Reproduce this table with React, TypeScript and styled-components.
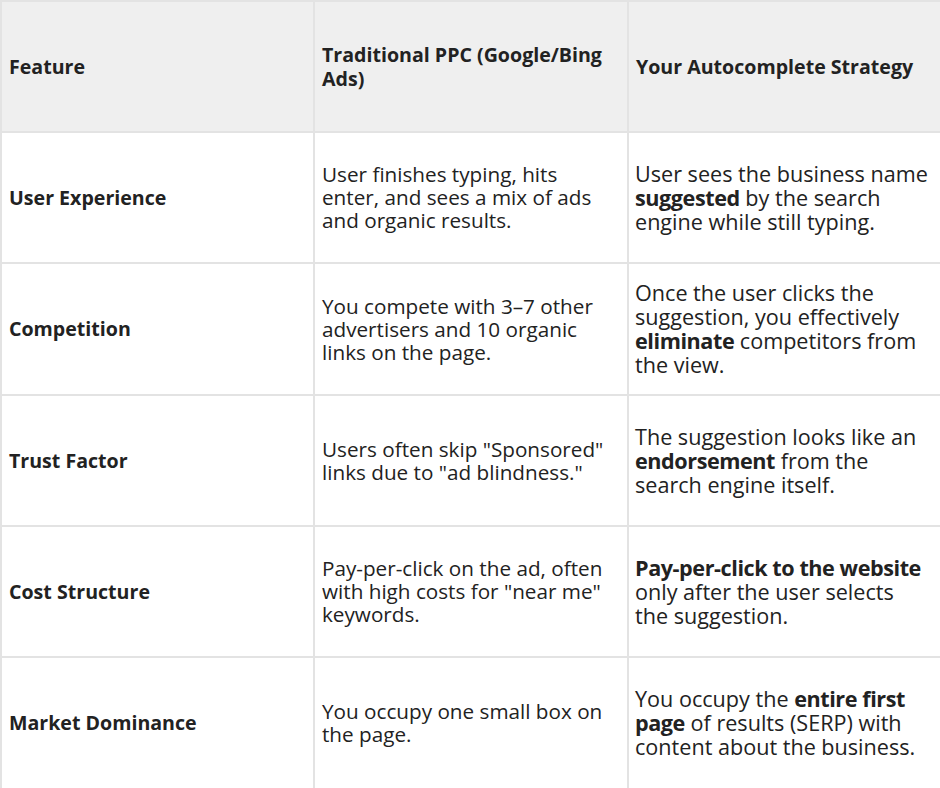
import React from "react";
import styled, { createGlobalStyle } from "styled-components";

const Global = createGlobalStyle`
  html, body { margin: 0; padding: 0; background: #ffffff; }
  body { font-family: "Open Sans", "Noto Sans", sans-serif; color: #222222; }
`;

const Table = styled.div`
  width: 940px;
  height: 788px;
  display: grid;
  grid-template-columns: 313px 314px 313px;
  grid-template-rows: 131px 131px 132px 131px 131px 132px;
  box-sizing: border-box;
  border-top: 2px solid #e3e3e3;
  border-left: 2px solid #e3e3e3;
`;

type Kind = "head" | "label" | "ppc" | "auto";

const sizes: Record<Kind, { fs: string; lh: string; fw: number; pl: string }> = {
  head: { fs: "19.6px", lh: "23.6px", fw: 700, pl: "7px" },
  label: { fs: "19.6px", lh: "23.6px", fw: 700, pl: "7px" },
  ppc: { fs: "20.7px", lh: "23px", fw: 400, pl: "7px" },
  auto: { fs: "21.6px", lh: "24px", fw: 400, pl: "6px" },
};

const Cell = styled.div<{ $kind: Kind }>`
  box-sizing: border-box;
  border-right: 2px solid #e3e3e3;
  border-bottom: 2px solid #e3e3e3;
  background: ${(p) => (p.$kind === "head" ? "#efefef" : "#ffffff")};
  display: flex;
  align-items: center;
  padding: 0 2px 0 ${(p) => sizes[p.$kind].pl};
  font-size: ${(p) => sizes[p.$kind].fs};
  font-weight: ${(p) => sizes[p.$kind].fw};
  line-height: ${(p) => sizes[p.$kind].lh};
  color: #222222;
  overflow: hidden;
`;

const Text = styled.div`
  display: block;
`;

const Line = styled.span`
  display: block;
  white-space: nowrap;
`;

const B = styled.b`
  font-weight: 700;
  letter-spacing: -0.02em;
`;

type Row = { label: string; ppc: React.ReactNode[]; auto: React.ReactNode[] };

const rows: Row[] = [
  {
    label: "User Experience",
    ppc: ["User finishes typing, hits", "enter, and sees a mix of ads", "and organic results."],
    auto: [
      "User sees the business name",
      <>
        <B>suggested</B> by the search
      </>,
      "engine while still typing.",
    ],
  },
  {
    label: "Competition",
    ppc: ["You compete with 3–7 other", "advertisers and 10 organic", "links on the page."],
    auto: [
      "Once the user clicks the",
      "suggestion, you effectively",
      <>
        <B>eliminate</B> competitors from
      </>,
      "the view.",
    ],
  },
  {
    label: "Trust Factor",
    ppc: ['Users often skip "Sponsored"', 'links due to "ad blindness."'],
    auto: [
      "The suggestion looks like an",
      <>
        <B>endorsement</B> from the
      </>,
      "search engine itself.",
    ],
  },
  {
    label: "Cost Structure",
    ppc: ["Pay-per-click on the ad, often", 'with high costs for "near me"', "keywords."],
    auto: [
      <>
        <B>Pay-per-click to the website</B>
      </>,
      "only after the user selects",
      "the suggestion.",
    ],
  },
  {
    label: "Market Dominance",
    ppc: ["You occupy one small box on", "the page."],
    auto: [
      <>
        You occupy the <B>entire first</B>
      </>,
      <>
        <B>page</B> of results (SERP) with
      </>,
      "content about the business.",
    ],
  },
];

const Lines = ({ items }: { items: React.ReactNode[] }) => (
  <Text>
    {items.map((l, i) => (
      <Line key={i}>{l}</Line>
    ))}
  </Text>
);

export default function App() {
  return (
    <>
      <Global />
      <Table>
        <Cell $kind="head">
          <Text>Feature</Text>
        </Cell>
        <Cell $kind="head">
          <Lines items={["Traditional PPC (Google/Bing", "Ads)"]} />
        </Cell>
        <Cell $kind="head">
          <Text>Your Autocomplete Strategy</Text>
        </Cell>
        {rows.map((r) => (
          <React.Fragment key={r.label}>
            <Cell $kind="label">
              <Text>{r.label}</Text>
            </Cell>
            <Cell $kind="ppc">
              <Lines items={r.ppc} />
            </Cell>
            <Cell $kind="auto">
              <Lines items={r.auto} />
            </Cell>
          </React.Fragment>
        ))}
      </Table>
    </>
  );
}
